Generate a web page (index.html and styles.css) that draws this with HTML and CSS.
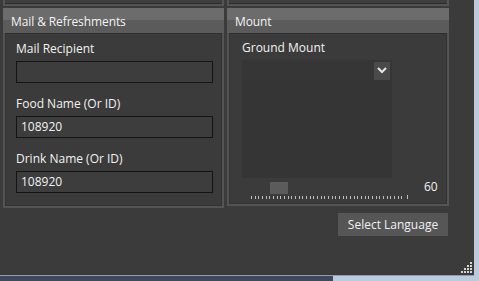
FILE: index.html
```html
<!DOCTYPE html>
<html lang="en">
  <head>
    <meta charset="UTF-8" />
    <title>Mail &amp; Mount</title>
    <link rel="stylesheet" href="styles.css">
  </head>
  <body>
    <div class="window">
      <div class="stubs">
        <div class="stub stub-left"></div>
        <div class="stub stub-right"></div>
      </div>

      <div class="groups">
        <section class="group group-mail">
          <div class="group-header">Mail &amp; Refreshments</div>
          <div class="group-body">
            <label>Mail Recipient</label>
            <div class="textbox"></div>

            <label>Food Name (Or ID)</label>
            <div class="textbox">108920</div>

            <label>Drink Name (Or ID)</label>
            <div class="textbox">108920</div>
          </div>
        </section>

        <section class="group group-mount">
          <div class="group-header">Mount</div>
          <div class="group-body">
            <label class="mount-label">Ground Mount</label>
            <div class="combo">
              <span class="combo-btn">
                <svg width="10" height="7" viewBox="0 0 10 7">
                  <polyline points="1,1 5,5 9,1" fill="none" stroke="#e6e6e6" stroke-width="2" />
                </svg>
              </span>
            </div>
            <div class="mount-list"></div>
            <div class="slider-row">
              <div class="slider">
                <div class="thumb"></div>
                <svg class="ticks" width="157" height="5" viewBox="0 0 157 5">
                  <defs>
                    <pattern id="tick" width="11" height="5" patternUnits="userSpaceOnUse">
                      <rect x="0" y="1" width="1" height="3" fill="#bdbdbd" />
                      <rect x="4" y="1" width="1" height="3" fill="#bdbdbd" />
                      <rect x="7" y="1" width="1" height="3" fill="#bdbdbd" />
                    </pattern>
                  </defs>
                  <rect x="0" y="0" width="154" height="5" fill="url(#tick)" />
                  <rect x="156" y="0" width="1" height="4" fill="#bdbdbd" />
                </svg>
              </div>
              <span class="slider-value">60</span>
            </div>
          </div>
        </section>
      </div>

      <div class="actions">
        <button type="button">Select Language</button>
      </div>

      <svg class="grip" width="11" height="11" viewBox="0 0 11 11">
        <rect x="9" y="0" width="2" height="2" />
        <rect x="6" y="3" width="2" height="2" />
        <rect x="9" y="3" width="2" height="2" />
        <rect x="3" y="6" width="2" height="2" />
        <rect x="6" y="6" width="2" height="2" />
        <rect x="9" y="6" width="2" height="2" />
        <rect x="0" y="9" width="2" height="2" />
        <rect x="3" y="9" width="2" height="2" />
        <rect x="6" y="9" width="2" height="2" />
        <rect x="9" y="9" width="2" height="2" />
      </svg>
    </div>
  </body>
</html>
```

FILE: styles.css
```css
* {
  box-sizing: border-box;
}
body {
  margin: 0;
  width: 479px;
  height: 281px;
  overflow: hidden;
  background: linear-gradient(to right, #3d4a5a 0, #3d4a5a 333px, #b9cbdd 333px);
  font-family: "Open Sans", sans-serif;
  font-size: 12px;
  color: #f2f2f2;
}
.window {
  position: relative;
  width: 474px;
  height: 276px;
  padding: 0 25px 0 3px;
  background: #3b3b3b;
  border-bottom: 1px solid #8e9cab;
}
.stubs {
  display: flex;
  gap: 3px;
  height: 6px;
  margin-bottom: 2px;
}
.stub {
  width: 221px;
  background: #3e3e3e;
  border: 2px solid #545454;
  border-top: 0;
  box-shadow: inset 0 -1px #2c2c2c;
}
.stub-right {
  width: 222px;
}
.groups {
  display: flex;
  gap: 3px;
  height: 198px;
}
.group {
  width: 221px;
  display: flex;
  flex-direction: column;
}
.group-mount {
  width: 222px;
}
.group-header {
  height: 25px;
  padding: 2px 0 0 8px;
  line-height: 23px;
  background: linear-gradient(#6c6c6c 0, #6c6c6c 12px, #5b5b5b 12px);
  color: #f4f4f4;
  letter-spacing: -0.1px;
}
.group-body {
  flex: 1;
  background: #3b3b3b;
  border: 2px solid #545454;
  border-top: 0;
  box-shadow: inset 0 1px #2f2f2f, inset 1px 0 #333, inset -1px 0 #333, inset 0 -1px #333;
}
.group-mail .group-body {
  padding: 8px 0 0 11px;
}
.group-mount .group-body {
  padding: 7px 0 0 13px;
}
label {
  display: block;
  line-height: 16px;
  margin-bottom: 4px;
}
.textbox {
  width: 197px;
  height: 22px;
  margin-bottom: 13px;
  padding-left: 4px;
  line-height: 20px;
  background: #3d3d3d;
  border: 1px solid #141414;
}
.mount-label {
  margin-bottom: 4px;
}
.combo {
  width: 150px;
  height: 21px;
  padding-right: 2px;
  display: flex;
  justify-content: flex-end;
  align-items: center;
  background: #363636;
}
.combo-btn {
  width: 16px;
  height: 18px;
  display: flex;
  justify-content: center;
  align-items: center;
  background: #4a4a4a;
}
.combo-btn svg {
  display: block;
}
.mount-list {
  width: 150px;
  height: 97px;
  background: #353535;
}
.slider-row {
  display: flex;
  align-items: flex-start;
  margin-top: 4px;
}
.slider {
  width: 157px;
  margin-left: 9px;
}
.thumb {
  width: 18px;
  height: 12px;
  margin-left: 19px;
  background: #5b5b5b;
}
.ticks {
  display: block;
  margin-top: 1px;
}
.slider-value {
  margin-left: 16px;
  margin-top: -3px;
  line-height: 16px;
}
.actions {
  display: flex;
  justify-content: flex-end;
  padding-top: 7px;
}
button {
  width: 110px;
  height: 23px;
  margin-right: 1px;
  padding: 0;
  background: #565656;
  border: none;
  color: #f0f0f0;
  font-family: inherit;
  font-size: 12px;
}
.grip {
  position: absolute;
  right: 2px;
  bottom: 2px;
  fill: #d6d6d6;
}
```
